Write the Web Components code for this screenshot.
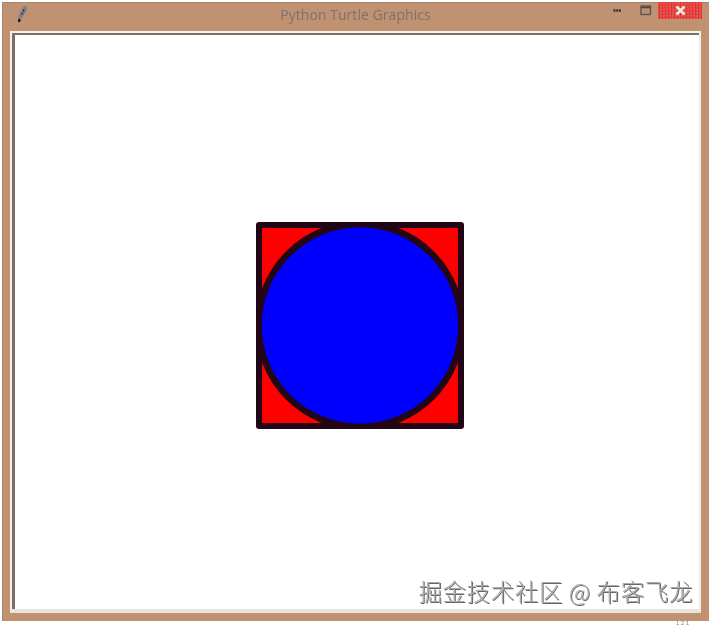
<!DOCTYPE html>
<html><head><meta charset="utf-8"><style>
html,body{margin:0;height:100%;background:#fff;overflow:hidden}
body{padding:2px 3px 0 2px;box-sizing:border-box;height:626px;width:712px;position:relative}
.cut{position:absolute;left:676px;top:620px;font:6px/6px "Liberation Sans",sans-serif;letter-spacing:1.5px;color:#8a8a8a;filter:blur(.3px)}
</style></head><body>
<turtle-window title="Python Turtle Graphics">
  <turtle-canvas></turtle-canvas>
  <span slot="mark">掘金技术社区 @ 布客飞龙</span>
</turtle-window>
<span class="cut">121</span>
<template id="win"><style>
:host{display:flex;flex-direction:column;width:707px;height:619px;background:#c09272;box-sizing:border-box;padding:0 8px 8px 8px;position:relative;
 box-shadow:inset 1px 1px 0 #a8846b;filter:blur(.35px)}
.bar{height:29px;position:relative;flex:none}
.title{position:absolute;left:0;right:0;top:4px;text-align:center;font:13.9px/18px "Open Sans",sans-serif;color:#7a736b;letter-spacing:.1px}
.pen{position:absolute;left:5px;top:2px}
.min{position:absolute;left:603px;top:5px}
.max{position:absolute;left:630px;top:3px}
.close{position:absolute;left:648px;top:0;width:44px;height:17px;display:flex;align-items:center;justify-content:center;
 background:repeating-conic-gradient(#ee3030 0 25%,#d8605a 0 50%) 0 0/3px 3px}
.well{flex:1;display:flex;border:solid;border-width:2px 2px 4px 2px;border-color:#f6f1e6 #efece6 #e9e5dc #f6f1e6;position:relative;min-height:0}
.inner{flex:1;display:flex;border:solid;border-width:2px 0 0 3px;border-color:#7b6f66;background:#fff;min-width:0}
.mark{position:absolute;right:16px;bottom:15px;font:23.5px/30px "Noto Sans CJK SC","Liberation Sans",sans-serif;font-weight:300;color:#ababab;letter-spacing:.6px;text-shadow:1px 1px 0 #666,-1px -1px 0 #fff;white-space:nowrap}
</style>
<div class="bar">
  <svg class="pen" width="14" height="19" viewBox="0 0 14 19"><path d="M10.500 1.500 C12.500 2.500 12.500 5 11 7.500 L7 14 L4.500 16 L3 15 C3 11.500 5 8.500 6.500 6 C7.500 3.500 9 1.500 10.500 1.500Z" fill="#7f7f88"/><path d="M9 5.500 L6.500 11" stroke="#30303c" stroke-width="1.500" stroke-dasharray="2 1.500"/><path d="M4.500 15 L4 18" stroke="#111" stroke-width="2.200"/></svg>
  <div class="title" id="t"></div>
  <svg class="min" width="9" height="7" viewBox="0 0 9 7"><path d="M0.500 3.500H8.500" stroke="#35322f" stroke-width="2.500" stroke-dasharray="2 .7"/></svg>
  <svg class="max" width="12" height="11" viewBox="0 0 12 11"><rect x="1" y="1" width="9.500" height="8.500" fill="#b58f78" stroke="#5a5048" stroke-width="1.300"/><path d="M1 2.500H10.500" stroke="#4d453f" stroke-width="1.500"/></svg>
  <div class="close"><svg width="13" height="11" viewBox="0 0 13 11"><path d="M2.500 1.500 L10.500 9.500 M10.500 1.500 L2.500 9.500" stroke="#f4e6dc" stroke-width="2.800"/></svg></div>
</div>
<div class="well"><div class="inner"><slot></slot></div></div>
<div class="mark"><slot name="mark"></slot></div>
</template>
<template id="cv"><style>
:host{display:block;flex:1;min-width:0}
svg{display:block;width:100%;height:100%}
</style>
<svg viewBox="0 0 684 574" preserveAspectRatio="none" aria-label="Red square with a blue circle">
  <defs><clipPath id="sq"><rect x="241" y="187" width="208" height="207"/></clipPath></defs>
  <rect x="244" y="190" width="202" height="201" fill="#fe0000" stroke="#230616" stroke-width="6" stroke-linejoin="round"/>
  <circle cx="345" cy="290.500" r="101.500" fill="#0000fe" stroke="#230616" stroke-width="6.500" clip-path="url(#sq)"/>
</svg>
</template>
<script>
function mount(el,id){el.attachShadow({mode:"open"}).appendChild(document.getElementById(id).content.cloneNode(true));return el.shadowRoot}
customElements.define("turtle-window",class extends HTMLElement{connectedCallback(){if(this.shadowRoot)return;const r=mount(this,"win");r.getElementById("t").textContent=this.getAttribute("title");this.removeAttribute("title")}});
customElements.define("turtle-canvas",class extends HTMLElement{connectedCallback(){if(!this.shadowRoot)mount(this,"cv")}});
</script>
</body></html>
